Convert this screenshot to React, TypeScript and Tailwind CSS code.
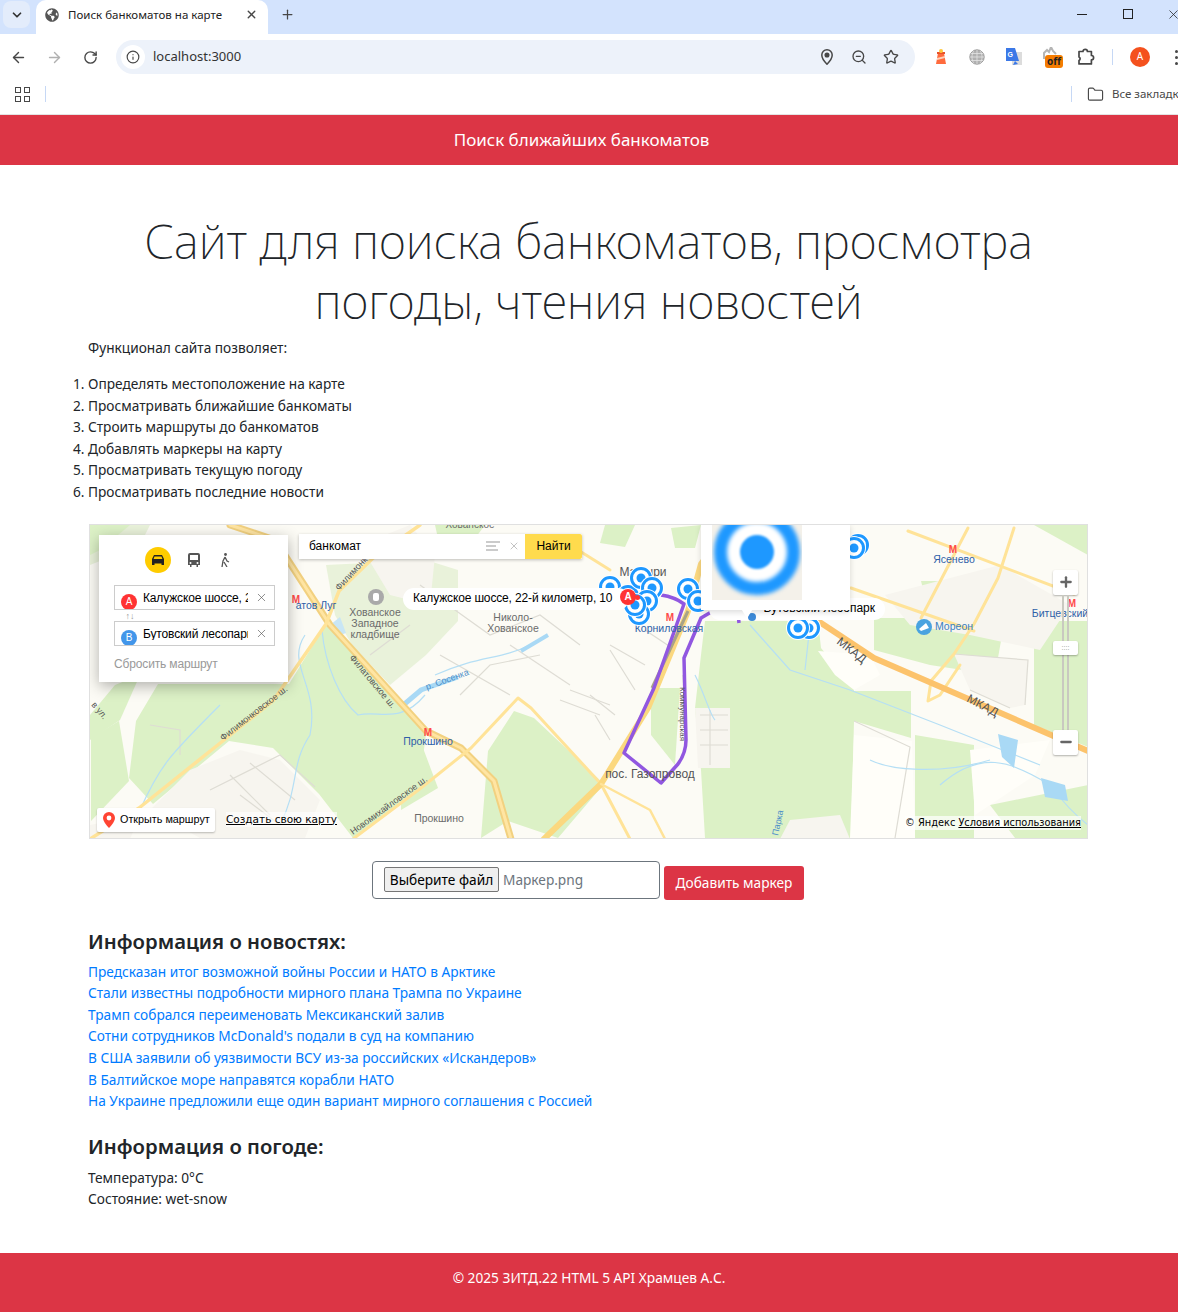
import { ArrowLeft, ArrowRight, RotateCw, Info, ZoomOut, Star, Plus, X, Minus, ChevronDown, Folder } from "lucide-react";
import { FaGlobeAmericas } from "react-icons/fa";

const features = [
  "Определять местоположение на карте",
  "Просматривать ближайшие банкоматы",
  "Строить маршруты до банкоматов",
  "Добавлять маркеры на карту",
  "Просматривать текущую погоду",
  "Просматривать последние новости",
];

const news = [
  "Предсказан итог возможной войны России и НАТО в Арктике",
  "Стали известны подробности мирного плана Трампа по Украине",
  "Трамп собрался переименовать Мексиканский залив",
  "Сотни сотрудников McDonald's подали в суд на компанию",
  "В США заявили об уязвимости ВСУ из-за российских «Искандеров»",
  "В Балтийское море направятся корабли НАТО",
  "На Украине предложили еще один вариант мирного соглашения с Россией",
];

const greens = [
  "0,0 40,0 10,25 0,30",
  "1,213 29,196 39,256 1,296",
  "199,159 236,99 336,209 329,263 263,313 229,269 183,223 139,216 63,279 39,253 46,196 68,159",
  "398,226 424,186 444,193 514,259 468,313 418,296 391,313",
  "311,223 330,215 348,263 311,285",
  "561,163 590,163 585,240 561,210",
  "615,96 728,96 731,123 764,163 764,196 761,313 615,313 611,245 605,183 611,130",
  "764,166 821,166 821,213 764,196",
  "784,93 915,93 905,150 840,140 784,125",
  "825,210 884,220 884,313 825,313",
  "944,96 998,96 998,222 944,200",
  "900,280 998,260 998,313 925,313",
  "944,0 998,0 998,30",
  "831,56 851,56 840,92",
  "515,0 545,0 535,22 510,18",
  "581,3 611,0 605,23 585,23",
  "0,190 25,160 50,150 30,195 0,215",
  "345,0 395,0 380,20 350,22",
];

const paleGreens = [
  "236,40 336,35 368,45 368,96 336,130 300,160 262,120 245,90",
  "0,0 60,0 50,20 0,40",
];

const hoods = [
  "100,245 150,225 190,235 230,275 215,313 110,313 60,285",
  "605,183 640,183 640,243 608,243",
  "864,129 938,135 935,180 920,183 880,165",
  "795,70 910,40 980,80 950,125 880,110 820,100",
  "270,20 320,0 345,30 340,80 300,70",
  "0,300 50,290 40,314 0,314",
  "700,295 750,290 760,314 690,314",
];

const whites = [
  "728,126 780,130 790,150 764,165 745,150",
  "764,210 822,216 825,313 760,313",
  "880,225 960,215 945,250 885,290",
];

const thinLines = [
  "M120 265 L190 230 L225 262",
  "M140 250 L180 290",
  "M160 238 L205 275",
  "M150 270 L190 300",
  "M330 60 L400 110 L450 90 L490 120",
  "M350 130 L420 170",
  "M420 120 L480 160",
  "M370 170 L400 140 L450 130",
  "M470 175 L510 190 M480 165 L520 180 M520 120 L555 140",
  "M610 190 L638 190 M610 205 L638 205 M610 220 L638 220 M620 185 L620 240",
  "M500 170 L525 190 M505 190 L520 215",
  "M555 105 L585 125 M520 125 L545 165",
  "M764 196 L820 222 L805 313",
  "M864 129 L938 135 L935 180 M880 165 L920 183",
  "M60 200 L90 205 L90 230",
  "M280 130 L320 100",
];

const streams = [
  "M50 285 C70 240 80 230 130 180",
  "M215 110 C195 140 230 160 220 210 C200 240 210 260 190 300",
  "M232 105 C235 140 250 175 268 190 C290 185 310 200 335 170",
  "M345 150 C390 130 410 135 440 120",
  "M660 100 L700 145 L760 165 L850 200 L900 220 L950 240",
  "M720 100 L715 145",
  "M850 260 C890 225 920 235 960 260 C975 280 985 290 998 300",
  "M780 235 C800 245 850 250 900 235",
  "M605 150 C615 170 620 190 625 195",
];

const markers: [number, number][] = [
  [520, 62], [538, 71], [551, 53], [562, 63], [557, 76], [549, 89], [545, 80],
  [598, 64], [608, 76], [719, 103], [708, 103], [768, 20], [764, 23],
];

function MapCanvas() {
  return (
    <svg viewBox="0 0 998 314" className="absolute left-px top-px h-[314px] w-[998px]" style={{ fontFamily: "'Liberation Sans', sans-serif" }}>
      <rect width="998" height="314" fill="#fcfbf5" />
      {paleGreens.map((p, i) => <polygon key={i} points={p} fill="#e9f2da" />)}
      {greens.map((p, i) => <polygon key={i} points={p} fill="#dcf1c6" />)}
      {hoods.map((p, i) => <polygon key={i} points={p} fill="#f7f5ef" />)}
      {whites.map((p, i) => <polygon key={i} points={p} fill="#fffef9" />)}
      {thinLines.map((d, i) => <path key={i} d={d} fill="none" stroke="#dedcd4" strokeWidth="1.200" />)}
      {streams.map((d, i) => <path key={i} d={d} fill="none" stroke="#b5dff5" strokeWidth="1.200" />)}
      <path d="M311 182 L331 165 L368 152" fill="none" stroke="#a9d9f5" strokeWidth="5" />
      <path d="M431 126 L458 110" fill="none" stroke="#a9d9f5" strokeWidth="4" />
      <polygon points="908,209 928,215 924,243 912,232" fill="#a9d9f5" />
      <polygon points="951,253 975,260 978,276 955,272" fill="#a9d9f5" />
      <polygon points="240,100 250,92 256,108 245,112" fill="#c9e6f5" />

      <g fill="none" strokeLinecap="round" strokeLinejoin="round">
        <path d="M140 0 L185 15 L240 100 L336 206 L371 223 L404 256 L421 314" stroke="#f2d180" strokeWidth="7" />
        <path d="M140 0 L185 15 L240 100 L336 206 L371 223 L404 256 L421 314" stroke="#ffe5a3" strokeWidth="3" />
        <path d="M0 314 L49 283 L129 219 L183 176 L236 99 L249 66 L283 33 L330 0" stroke="#ffe398" strokeWidth="3.500" />
        <path d="M263 314 L331 263 L381 223 L428 173 L441 183 L511 259 L540 314" stroke="#ffe398" strokeWidth="3" />
        <path d="M454 314 L511 259 L558 183 L598 86 L611 39 L640 0" stroke="#fbd87f" strokeWidth="6" />
        <path d="M480 20 L520 45" stroke="#ffe398" strokeWidth="3" />
        <path d="M511 259 L560 285 L575 314" stroke="#ffe398" strokeWidth="2.500" />
        <path d="M818 6 L984 69" stroke="#ffe398" strokeWidth="3" />
        <path d="M761 63 L884 106" stroke="#ffe398" strokeWidth="3" />
        <path d="M878 3 L831 93" stroke="#ffe398" strokeWidth="3" />
        <path d="M924 3 L908 53 L884 99 L864 129 L841 156 L838 176 L850 170 L870 140" stroke="#ffe398" strokeWidth="3" />
        <path d="M700 70 L728 96 L784 133 L998 226" stroke="#fcc36c" strokeWidth="6" />
      </g>
      <path d="M562 163 L598 86" stroke="#a8a388" strokeWidth="3" />
      <path d="M594 150 L595 200" stroke="#a8a388" strokeWidth="2.500" />

      <path d="M571 70 Q585 72 594 79 L564 163 L534 228 L571 258 L588 239 Q596 228 596 215 L594 133 L611 93 L628 83 M638 86 L641 93 L648 89 L649 98" fill="none" stroke="#9157e0" strokeWidth="3.500" strokeLinejoin="round" />

      <g fontSize="10.500" fill="#6b6b6b" textAnchor="middle">
        <text x="285" y="91">Хованское</text>
        <text x="285" y="102">Западное</text>
        <text x="285" y="113">кладбище</text>
        <text x="423" y="96">Николо-</text>
        <text x="423" y="107">Хованское</text>
        <text x="349" y="297">Прокшино</text>
        <text x="560" y="253" fontSize="12" fill="#555">пос. Газопровод</text>
        <text x="553" y="51" fontSize="12" fill="#555">Мамыри</text>
        <text x="380" y="3" fontSize="10">Хованское</text>
      </g>
      <g fontSize="10.500" fill="#2f5fa8" textAnchor="middle">
        <text x="338" y="220">Прокшино</text>
        <text x="864" y="38">Ясенево</text>
        <text x="970" y="92">Битцевский</text>
        <text x="579" y="107">Корниловская</text>
        <text x="226" y="84">атов Луг</text>
      </g>
      <text x="845" y="105" fontSize="10.500" fill="#3a7fc0">Мореон</text>
      <g fontSize="9" fill="#555">
        <text transform="translate(249 66) rotate(-47)">Филимонк</text>
        <text transform="translate(259 133) rotate(50)">Филатовское ш.</text>
        <text transform="translate(133 216) rotate(-38)">Филимонковское ш.</text>
        <text transform="translate(263 310) rotate(-36)">Новомихайловское ш.</text>
        <text transform="translate(1 180) rotate(50)">в ул.</text>
        <text transform="translate(337 165) rotate(-20)" fill="#4c8fc8">р. Сосенка</text>
        <text transform="translate(590 162) rotate(90)" fontSize="8">Коммунарская</text>
        <text transform="translate(688 311) rotate(-78)" fill="#4c8fc8">Парка</text>
      </g>
      <g fontSize="12" fill="#555">
        <text transform="translate(746 118) rotate(38)">МКАД</text>
        <text transform="translate(876 176) rotate(28)">МКАД</text>
      </g>
      <g fill="#ff4a4a" fontSize="10" fontWeight="700" textAnchor="middle">
        <text x="206" y="78">М</text>
        <text x="338" y="211">М</text>
        <text x="580" y="96">М</text>
        <text x="863" y="28">М</text>
        <text x="982" y="82">М</text>
      </g>
      <circle cx="286" cy="72" r="8" fill="#a9a9a9" />
      <rect x="283" y="68" width="6" height="8" rx="2" fill="#fff" />
      <circle cx="834" cy="102" r="8" fill="#4aa3e0" />
      <path d="M829 104 L836 98 L839 103 L831 106 Z" fill="#fff" />

      {markers.map(([x, y], i) => (
        <g key={i}>
          <circle cx={x} cy={y} r="12" fill="#fff" />
          <circle cx={x} cy={y} r="9.500" fill="none" stroke="#1e98ff" strokeWidth="3" />
          <circle cx={x} cy={y} r="4.500" fill="#1e98ff" />
        </g>
      ))}
    </svg>
  );
}

function ExtensionIcons() {
  return (
    <div className="ml-[18px] flex items-center">
      <svg width="16" height="18" viewBox="0 0 16 18" className="mr-[20px]">
        <path d="M5 5h6l2 11H3z" fill="#ff6b3d" />
        <path d="M4 10l8-2v2l-8 2z" fill="#ffd0b8" />
        <rect x="4" y="4" width="8" height="2" fill="#e8502a" />
        <circle cx="8" cy="3" r="2" fill="#ffc83d" />
      </svg>
      <svg width="16" height="16" viewBox="0 0 16 16" className="mr-[20px]" fill="none" stroke="#9c9c9c">
        <circle cx="8" cy="8" r="7.200" fill="#b0b0b0" />
        <path d="M1 8h14M2 4.500h12M2 11.500h12M8 1v14M4.500 2c-2 4-2 8 0 12M11.500 2c2 4 2 8 0 12" stroke="#e4e4e4" strokeWidth="0.800" />
      </svg>
      <svg width="18" height="18" viewBox="0 0 18 18" className="mr-[20px]">
        <rect x="7" y="4" width="10" height="13" fill="#dcdcdc" />
        <path d="M1 0h9l4 13H1z" fill="#3b78e7" />
        <path d="M10 13l-2 4 5-1z" fill="#3b78e7" />
        <text x="2.500" y="9" fontSize="7" fontWeight="700" fill="#fff" style={{ fontFamily: "'Liberation Sans', sans-serif" }}>G</text>
      </svg>
      <div className="relative mr-[14px] h-[20px] w-[20px]">
        <svg width="14" height="12" viewBox="0 0 14 12" className="absolute left-0 top-0">
          <path d="M1 12V6l3-3 2 2 2-5 2 4 3 3" fill="none" stroke="#b5b5b5" strokeWidth="2" />
        </svg>
        <span className="absolute left-[2px] top-[8px] rounded-[3px] bg-[#f57c00] px-[2px] text-[10px] font-bold leading-[13px] text-[#222]">off</span>
      </div>
      <svg width="18" height="18" viewBox="0 0 18 18" fill="none" stroke="#474747" strokeWidth="1.700" strokeLinejoin="round">
        <path d="M2 3.500h4a2.200 2.200 0 014.400 0h4v4a2.200 2.200 0 010 4.400v4H2v-3.400a2 2 0 000-3.600z" />
      </svg>
      <div className="ml-[17px] h-[16px] w-px bg-[#c6d8f5]" />
      <div className="ml-[17px] flex h-[20px] w-[20px] items-center justify-center rounded-full bg-[#f4511e] text-[10px] text-white">A</div>
      <div className="ml-[25px] flex flex-col gap-[3px]">
        <span className="h-[3px] w-[3px] rounded-full bg-[#474747]" />
        <span className="h-[3px] w-[3px] rounded-full bg-[#474747]" />
        <span className="h-[3px] w-[3px] rounded-full bg-[#474747]" />
      </div>
    </div>
  );
}

function BrowserChrome() {
  return (
    <div className="h-[115px] w-[1178px] overflow-hidden border-b border-[#e3e3e3] bg-white text-[#474747]">
      <div className="flex h-[34px] items-start bg-[#d3e3fd]">
        <div className="ml-[3px] mt-[1px] flex h-[27px] w-[27px] shrink-0 items-center justify-center rounded-lg bg-[#e3ecfb]">
          <ChevronDown size={14} strokeWidth={3} className="text-[#333]" />
        </div>
        <div className="ml-[6px] flex h-[34px] w-[232px] shrink-0 items-center rounded-t-[10px] bg-white pb-[5px] pl-[9px] pr-[10px]">
          <FaGlobeAmericas size={14} className="text-[#555]" />
          <span className="ml-[9px] flex-1 text-[11.500px] text-[#222]">Поиск банкоматов на карте</span>
          <X size={13} strokeWidth={2.500} />
        </div>
        <Plus size={15} strokeWidth={2} className="ml-[12px] mt-[7px] shrink-0" />
        <div className="ml-[782px] mt-[14px] h-px w-[10px] shrink-0 bg-[#222]" />
        <div className="ml-[36px] mt-[9px] h-[10px] w-[10px] shrink-0 border border-[#222]" />
        <X size={15} strokeWidth={1.200} className="ml-[33px] mt-[7px] shrink-0 text-[#222]" />
      </div>
      <div className="flex h-[40px] items-center pl-[10px] pt-[6px]">
        <ArrowLeft size={17} strokeWidth={2} />
        <ArrowRight size={17} strokeWidth={2} className="ml-[19px] text-[#b0b0b0]" />
        <RotateCw size={15} strokeWidth={2.200} className="ml-[20px]" />
        <div className="ml-[18px] flex h-[34px] w-[799px] shrink-0 items-center rounded-full bg-[#edf2fa] pl-[5px] pr-[16px]">
          <div className="flex h-[24px] w-[24px] items-center justify-center rounded-full bg-white">
            <Info size={14} strokeWidth={2} />
          </div>
          <span className="ml-[8px] flex-1 text-[13px] text-[#333]">localhost:3000</span>
          <svg width="16" height="16" viewBox="0 0 16 16" fill="none" stroke="#474747" strokeWidth="1.500">
            <path d="M8 15.200S2.800 10 2.800 6a5.200 5.200 0 0110.400 0c0 4-5.200 9.200-5.200 9.200z" />
            <circle cx="8" cy="6" r="1.800" fill="#474747" />
          </svg>
          <ZoomOut size={16} strokeWidth={2} className="ml-[16px]" />
          <Star size={16} strokeWidth={2} className="ml-[16px]" />
        </div>
        <ExtensionIcons />
      </div>
      <div className="flex h-[40px] items-center pl-[15px]">
        <div className="grid w-[15px] shrink-0 grid-cols-2 gap-[3px]">
          {[0, 1, 2, 3].map(i => <span key={i} className="h-[6px] w-[6px] border-[1.500px] border-[#474747]" />)}
        </div>
        <div className="ml-[15px] h-[16px] w-px shrink-0 bg-[#c6d8f5]" />
        <div className="ml-[1025px] h-[16px] w-px shrink-0 bg-[#c6d8f5]" />
        <Folder size={17} strokeWidth={1.600} className="ml-[15px] shrink-0" />
        <span className="ml-[8px] whitespace-nowrap text-[11.500px]">Все закладки</span>
      </div>
    </div>
  );
}

function RoutePanel() {
  return (
    <div className="absolute left-[10px] top-[11px] h-[147px] w-[189px] bg-white shadow-[0_4px_14px_rgba(0,0,0,0.3)]">
      <div className="flex items-center pl-[46px] pt-[12px]">
        <div className="flex h-[26px] w-[26px] items-center justify-center rounded-full bg-[#ffcc00]">
          <svg width="14" height="12" viewBox="0 0 14 12"><path d="M3 1h8l2 4v6h-2.500V9.500h-7V11H1V5zM3.500 2.500L2.600 5h8.800l-.9-2.500z" fill="#222" fillRule="evenodd" /></svg>
        </div>
        <svg width="12" height="14" viewBox="0 0 12 14" className="ml-[17px]"><path d="M2 0h8a2 2 0 012 2v10h-2v2H8.500v-2h-5v2H2v-2H0V2a2 2 0 012-2zm0 2v5h8V2zM2.500 9a1 1 0 100 2 1 1 0 000-2zm7 0a1 1 0 100 2 1 1 0 000-2z" fill="#555" fillRule="evenodd" /></svg>
        <svg width="10" height="14" viewBox="0 0 10 14" className="ml-[20px]"><circle cx="5.500" cy="1.500" r="1.400" fill="#555" /><path d="M5 4L3 8l-1 6M5 4l2 4 2 1M4 9l3 5" fill="none" stroke="#555" strokeWidth="1.300" /></svg>
      </div>
      <div className="relative ml-[15px] mt-[12px] flex h-[25px] w-[161px] items-center overflow-hidden border border-[#ccc] pl-[28px] pr-[6px] pt-[1px] text-[12px] leading-none tracking-[-0.15px] text-black" style={{ fontFamily: "'Liberation Sans', sans-serif" }}>
        <span className="absolute left-[6px] top-[8px] flex h-[16px] w-[16px] items-center justify-center rounded-full bg-[#ff3333] text-[10px] text-white">A</span>
        <span className="w-[105px] overflow-hidden whitespace-nowrap">Калужское шоссе, 22-й</span>
        <X size={13} strokeWidth={1.200} className="ml-auto text-[#555]" />
      </div>
      <div className="relative z-10 ml-[22px] h-[11px] w-[18px] bg-white text-center text-[9px] leading-[11px] text-[#999]">↑↓</div>
      <div className="relative ml-[15px] flex h-[25px] w-[161px] items-center overflow-hidden border border-[#ccc] pl-[28px] pr-[6px] pt-[1px] text-[12px] leading-none tracking-[-0.15px] text-black" style={{ fontFamily: "'Liberation Sans', sans-serif" }}>
        <span className="absolute left-[6px] top-[8px] flex h-[16px] w-[16px] items-center justify-center rounded-full bg-[#4296ea] text-[10px] text-white">B</span>
        <span className="w-[105px] overflow-hidden whitespace-nowrap">Бутовский лесопарк</span>
        <X size={13} strokeWidth={1.200} className="ml-auto text-[#555]" />
      </div>
      <div className="ml-[15px] mt-[8px] text-[12px] tracking-[-0.15px] text-[#999]" style={{ fontFamily: "'Liberation Sans', sans-serif" }}>Сбросить маршрут</div>
    </div>
  );
}

function MapOverlays() {
  return (
    <div style={{ fontFamily: "'Liberation Sans', sans-serif" }}>
      <div className="absolute left-[210px] top-[10px] flex h-[25px] w-[283px] bg-white shadow-[0_1px_3px_rgba(0,0,0,0.25)]">
        <span className="ml-[10px] flex-1 self-center pt-[2px] text-[12px] text-black">банкомат</span>
        <svg width="14" height="10" viewBox="0 0 14 10" className="self-center"><path d="M0 1h14M0 5h10M0 9h12" stroke="#bbb" strokeWidth="1.300" /></svg>
        <X size={12} strokeWidth={1.200} className="ml-[8px] self-center text-[#999]" />
        <div className="ml-[5px] flex w-[57px] items-center justify-center rounded-r-[2px] bg-[#ffdb4d] pt-[1px] text-[12px] text-black">Найти</div>
      </div>
      <div className="absolute left-[314px] top-[64px] flex h-[22px] w-[226px] items-center rounded-full bg-white pl-[10px] text-[12px] tracking-[-0.15px] text-black">Калужское шоссе, 22-й километр, 10</div>
      <div className="absolute left-[531px] top-[65px] flex h-[16px] w-[16px] items-center justify-center rounded-full bg-[#ff3333] text-[10px] font-bold text-white">A</div>
      <div className="absolute left-[546px] top-[71px] h-[5px] w-[5px] rounded-full bg-[#ff3333]" />
      <div className="absolute left-[620px] top-[74px] flex h-[22px] w-[176px] items-center justify-end rounded-full bg-white pr-[10px] text-[12px] text-black">Бутовский лесопарк</div>
      <div className="absolute left-[659px] top-[89px] h-[8px] w-[8px] rounded-full bg-[#3d8ad8]" />
      <div className="absolute left-[612px] top-0 h-[86px] w-[149px] overflow-hidden bg-white shadow-[0_2px_6px_rgba(0,0,0,0.15)]">
        <div className="relative ml-[11px] h-[76px] w-[90px] overflow-hidden bg-[#f4f1ea]">
          <div className="absolute left-[2px] top-[-15px] h-[86px] w-[86px] rounded-full border-[13px] border-[#1e98ff] bg-white blur-[2px]" />
          <div className="absolute left-[28px] top-[11px] h-[34px] w-[34px] rounded-full bg-[#1e98ff] blur-[1px]" />
        </div>
      </div>
      <div className="absolute left-[652px] top-[85px] h-[10px] w-[12px] bg-white [clip-path:polygon(0_0,100%_0,50%_100%)]" />

      <div className="absolute left-[964px] top-[46px] flex h-[25px] w-[25px] items-center justify-center rounded-[2px] bg-white shadow-[0_1px_2px_rgba(0,0,0,0.3)]">
        <Plus size={16} strokeWidth={3.500} className="text-[#666]" />
      </div>
      <div className="absolute left-[973px] top-[71px] h-[135px] w-[7px] border-x-2 border-[#c9c9c0]" />
      <div className="absolute left-[964px] top-[117px] flex h-[14px] w-[25px] items-center justify-center rounded-[2px] bg-white text-[7px] leading-none text-[#888] shadow-[0_1px_2px_rgba(0,0,0,0.3)]">::::</div>
      <div className="absolute left-[964px] top-[206px] flex h-[25px] w-[25px] items-center justify-center rounded-[2px] bg-white shadow-[0_1px_2px_rgba(0,0,0,0.3)]">
        <Minus size={16} strokeWidth={3.500} className="text-[#666]" />
      </div>

      <div className="absolute left-[8px] top-[284px] flex h-[24px] w-[118px] items-center rounded-[2px] bg-white pl-[6px] text-[10.800px] text-black shadow-[0_1px_2px_rgba(0,0,0,0.25)]">
        <svg width="12" height="16" viewBox="0 0 12 16"><path d="M6 0a6 6 0 00-6 6c0 4 6 10 6 10s6-6 6-10a6 6 0 00-6-6z" fill="#f43" /><circle cx="6" cy="6" r="2.400" fill="#fff" /></svg>
        <span className="ml-[5px]">Открыть маршрут</span>
      </div>
      <div className="absolute left-[137px] top-[288px] bg-white/60 text-[10.500px] leading-[15px] text-black underline" style={{ fontFamily: "'DejaVu Sans', sans-serif" }}>Создать свою карту</div>
      <div className="absolute right-[7px] top-[292px] bg-white/70 text-[9.800px] leading-[14px] text-black" style={{ fontFamily: "'DejaVu Sans', sans-serif" }}>
        © Яндекс <span className="underline">Условия использования</span>
      </div>
    </div>
  );
}

export default function App() {
  return (
    <div className="min-h-[1312px] w-[1178px] overflow-hidden bg-white text-[13.700px] leading-[21.600px] text-[#212529]" style={{ fontFamily: "'Noto Sans', 'Open Sans', sans-serif" }}>
      <BrowserChrome />
      <header className="flex h-[50px] items-center justify-center bg-[#dc3545] pr-[15px] text-[17px] text-white">Поиск ближайших банкоматов</header>
      <main className="ml-[88px] w-[1001px] pt-[46px]">
        <h1 className="text-center text-[47.400px] font-extralight leading-[60px]">Сайт для поиска банкоматов, просмотра погоды, чтения новостей</h1>
        <p className="mt-[6px]">Функционал сайта позволяет:</p>
        <ol className="mt-[14.400px] list-decimal">
          {features.map(f => <li key={f}>{f}</li>)}
        </ol>
        <div className="relative ml-px mt-[21px] h-[315px] w-[999px] overflow-hidden border border-[#e0e0e0]">
          <div className="absolute -left-px -top-px h-[315px] w-[999px]">
            <MapCanvas />
            <RoutePanel />
            <MapOverlays />
          </div>
        </div>
        <div className="mt-[22px] flex items-start pl-[284px]">
          <div className="flex h-[38px] w-[288px] items-center rounded-[4px] border border-[#6c757d] pl-[11px]">
            <div className="flex h-[25px] w-[115px] items-center justify-center rounded-[2px] border border-[#767676] bg-[#efefef] text-black">Выберите файл</div>
            <span className="ml-[4px] text-[#6c757d]">Маркер.png</span>
          </div>
          <button className="ml-[4px] mt-[5px] h-[34px] w-[140px] rounded-[3px] bg-[#dc3545] text-white">Добавить маркер</button>
        </div>
        <h2 className="mt-[28px] text-[20.300px] font-semibold leading-[26px]">Информация о новостях:</h2>
        <ul className="mt-[7px]">
          {news.map(n => <li key={n} className="text-[#007bff]">{n}</li>)}
        </ul>
        <h2 className="mt-[21px] text-[20.300px] font-semibold leading-[26px]">Информация о погоде:</h2>
        <div className="mt-[8px]">Температура: 0°C</div>
        <div>Состояние: wet-snow</div>
      </main>
      <footer className="mt-[43px] flex h-[59px] items-start justify-center bg-[#dc3545] pt-[14px] text-white">© 2025 ЗИТД.22 HTML 5 API Храмцев А.С.</footer>
    </div>
  );
}
